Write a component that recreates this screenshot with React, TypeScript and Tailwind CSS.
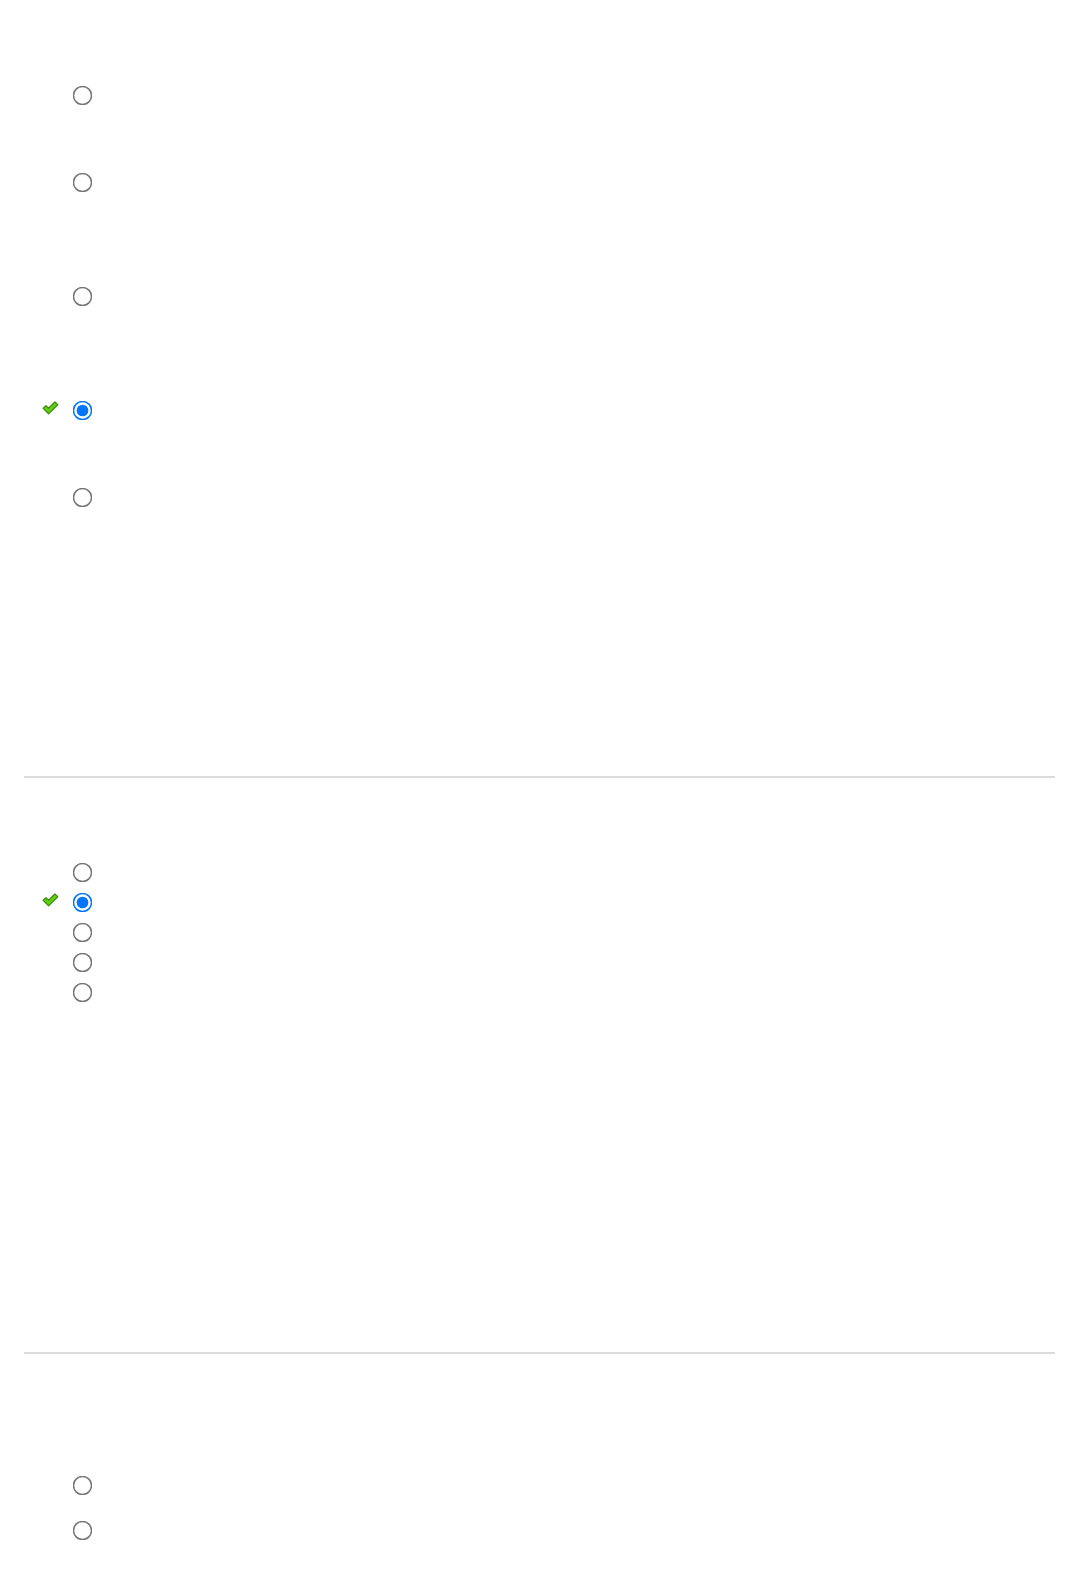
import React from "react";

type Option = { h: number; correct?: boolean };

function Check() {
  return (
    <svg width="17" height="14" viewBox="0 0 17 14" className="block">
      <path
        d="M1.2 7.3 L4 4.7 L6.6 7.2 L12.9 1 L15.8 3.7 L6.6 12.8 Z"
        fill="#5fd40a"
        stroke="#3f8f12"
        strokeWidth="1.3"
        strokeLinejoin="round"
      />
    </svg>
  );
}

function Row({ opt, name, idx }: { opt: Option; name: string; idx: number }) {
  return (
    <div className="flex items-start" style={{ height: opt.h }}>
      <div className="w-[30px] pt-[1px]">{opt.correct ? <Check /> : null}</div>
      <div className="flex h-5 w-5 items-center justify-center">
        <input
          type="radio"
          name={name}
          defaultChecked={!!opt.correct}
          aria-label={`${name}-${idx}`}
          className="m-0 h-[13px] w-[13px] scale-150"
        />
      </div>
    </div>
  );
}

export default function App() {
  return (
    <div className="min-h-[1569px] bg-white pl-6 pr-[21px] font-['Liberation_Sans',sans-serif] text-white">
      <div className="pl-[18px] pt-[85px] pb-[269px]">
        {[
          { h: 87 },
          { h: 114 },
          { h: 114 },
          { h: 87, correct: true },
          { h: 20 },
        ].map((o, i) => (
          <Row key={i} opt={o} name="q1" idx={i} />
        ))}
      </div>
      <div className="h-[2px] bg-[#dcdcdc]" />
      <div className="pl-[18px] pt-[84px] pb-[350px]">
        {[
          { h: 30 },
          { h: 30, correct: true },
          { h: 30 },
          { h: 30 },
          { h: 20 },
        ].map((o, i) => (
          <Row key={i} opt={o} name="q2" idx={i} />
        ))}
      </div>
      <div className="h-[2px] bg-[#dcdcdc]" />
      <div className="pl-[18px] pt-[121px]">
        {[{ h: 45 }, { h: 20 }].map((o, i) => (
          <Row key={i} opt={o} name="q3" idx={i} />
        ))}
      </div>
    </div>
  );
}
